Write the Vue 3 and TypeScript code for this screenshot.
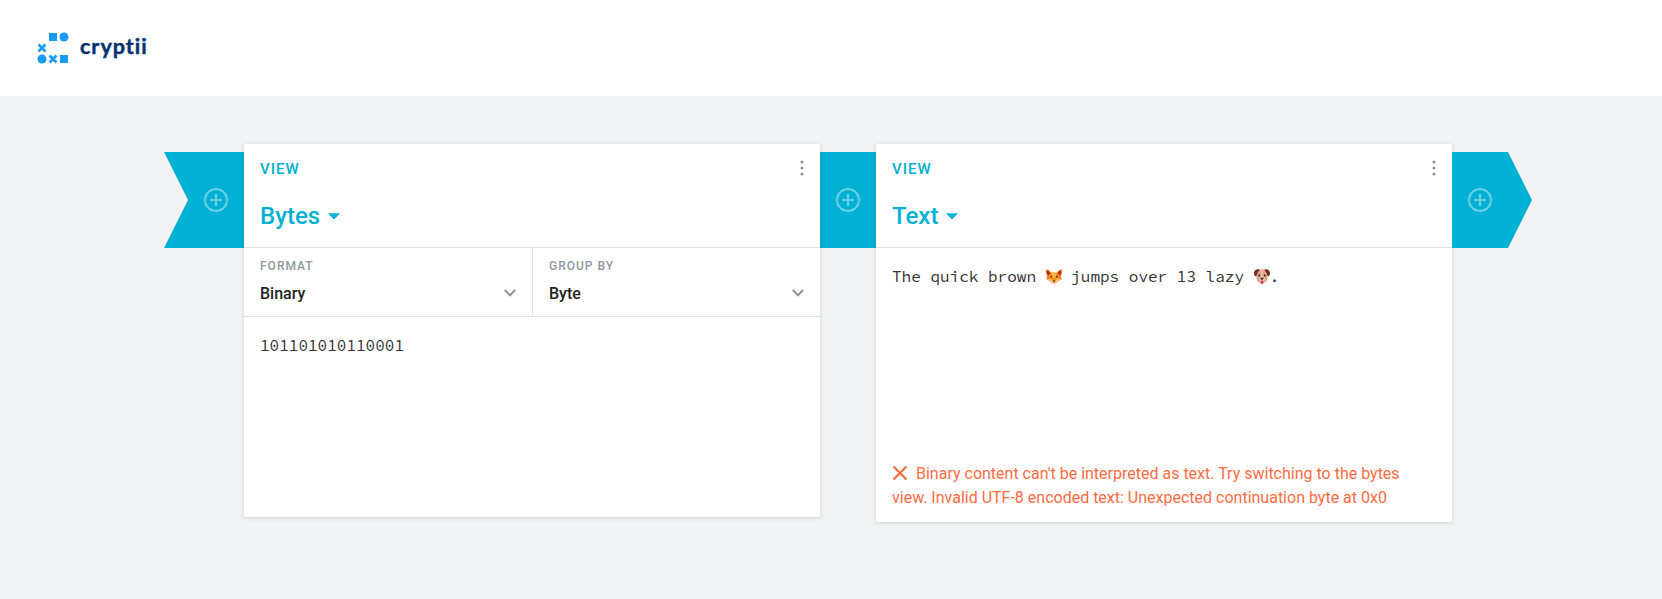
<script setup lang="ts">
interface Field {
  label: string
  value: string
}
interface Brick {
  title: string
  fields: Field[]
  content: string[]
  error?: string
}

const bricks: Brick[] = [
  {
    title: 'Bytes',
    fields: [
      { label: 'Format', value: 'Binary' },
      { label: 'Group by', value: 'Byte' },
    ],
    content: ['101101010110001'],
  },
  {
    title: 'Text',
    fields: [],
    content: ['The quick brown ', 'fox', ' jumps over 13 lazy ', 'dog', '.'],
    error:
      "Binary content can't be interpreted as text. Try switching to the bytes view. Invalid UTF-8 encoded text: Unexpected continuation byte at 0x0",
  },
]
</script>

<template>
  <div class="app">
    <header class="header">
      <a class="logo">
        <svg class="logo-mark" width="32" height="32" viewBox="0 0 32 32">
          <g fill="#1a9af0">
            <rect x="12" y="1" width="8" height="8" />
            <circle cx="27" cy="5" r="4.500" />
            <circle cx="5" cy="27" r="4.500" />
            <rect x="23" y="23" width="8" height="8" />
          </g>
          <g stroke="#1a9af0" stroke-width="2.600">
            <path d="M1.500 12.500l7 7M8.500 12.500l-7 7M12.500 23.500l7 7M19.500 23.500l-7 7" />
          </g>
        </svg>
        <span class="logo-text">cryptii</span>
      </a>
    </header>

    <main class="pipe">
      <div class="segment segment-start">
        <button class="add" aria-label="Add">
          <svg width="24" height="24" viewBox="0 0 24 24"><circle cx="12" cy="12" r="11" /><path d="M12 6v12M6 12h12" /></svg>
        </button>
      </div>
      <template v-for="(brick, i) in bricks" :key="brick.title">
        <section class="brick">
          <div class="brick-header">
            <div class="brick-top">
              <span class="mode">View</span>
              <svg class="menu" width="4" height="16" viewBox="0 0 4 16">
                <circle cx="2" cy="2" r="1.600" /><circle cx="2" cy="8" r="1.600" /><circle cx="2" cy="14" r="1.600" />
              </svg>
            </div>
            <h3 class="title">
              {{ brick.title }}
              <svg width="12" height="7" viewBox="0 0 12 7"><path d="M0 0.300h12L6 6.600z" /></svg>
            </h3>
          </div>
          <div v-if="brick.fields.length" class="fields">
            <div v-for="field in brick.fields" :key="field.label" class="field">
              <span class="label">{{ field.label }}</span>
              <span class="value">
                {{ field.value }}
                <svg width="12" height="8" viewBox="0 0 12 8"><path d="M0.800 1l5.200 5.200L11.200 1" /></svg>
              </span>
            </div>
          </div>
          <div class="content"><template v-for="(part, n) in brick.content" :key="n"><svg v-if="part === 'fox'" class="emoji" width="16" height="16" viewBox="0 0 16 16" role="img" aria-label="🦊">
                <path fill="#f28a1c" d="M0 .5C2.500.4 4 1.800 5 3.600h6C12 1.800 13.500.4 16 .5c.3 2.700-.2 5-1.200 6.500l1 3-2.600 1.500L10 14c-1.300 1.100-2.700 1.100-4 0l-3.200-2.500L.2 10l1-3C.2 5.500-.3 3.200 0 .5z" />
                <path fill="#bd2419" d="M.7 1.300C2.500 1.600 3.600 2.800 4.400 4.400L2 6.500C1 5 .7 3.300.7 1.300zM15.300 1.300c-1.800.3-2.900 1.500-3.700 3.100L14 6.500c1-1.500 1.300-3.200 1.300-5.200z" />
                <path fill="#ffb53f" d="M5.500 4.500L8 3.600l2.500.9L9.400 9H6.600z" />
                <path fill="#ffc070" d="M1.500 10.400l3.200-.8L7 12l1 .5L9 12l2.300-2.400 3.200.8-2.200 1.400L10 14H6l-2.300-2.200z" />
                <circle cx="5.200" cy="7.600" r=".95" fill="#513127" /><circle cx="10.800" cy="7.600" r=".95" fill="#513127" />
                <path fill="#3a3034" d="M6.600 11.600h2.800L8 13.600z" />
              </svg><svg v-else-if="part === 'dog'" class="emoji" width="16" height="16" viewBox="0 0 16 16" role="img" aria-label="🐶">
                <path fill="#dda188" d="M3.500 1.600C6 0 10 0 12.500 1.600 14 4 14.200 9 12.500 12c-1.500 2.700-7.500 2.700-9 0C1.800 9 2 4 3.500 1.600z" />
                <path fill="#e8bba5" d="M7.200 1h1.600l.6 6 2 3.200c0 2.400-1.400 3.300-3.400 3.300s-3.400-.9-3.400-3.300l2-3.200z" />
                <path fill="#6e291d" d="M5.800.8C3.500-.3 1.500.6.400 2.600-.4 4.200 0 6.500 1.600 7.400c1.500-.6 1.200-4 4.200-6.600zM10.200.8c2.300-1.100 4.300-.2 5.400 1.800.8 1.600.4 3.900-1.200 4.800-1.500-.6-1.200-4-4.200-6.600z" />
                <circle cx="5.200" cy="6.500" r="1.050" fill="#352c30" /><circle cx="10.800" cy="6.500" r="1.050" fill="#352c30" />
                <path fill="#352c30" d="M6 8.800h4L8.500 10.800v.8h-1v-.8z" />
                <path fill="#ed2f4f" d="M6.700 12h2.600v1.800c0 1.600-2.600 1.600-2.600 0z" />
              </svg><template v-else>{{ part }}</template></template></div>
          <p v-if="brick.error" class="error">
            <svg width="16" height="16" viewBox="0 0 16 16"><path d="M1.500 1.500l13 13M14.500 1.500l-13 13" /></svg>{{ brick.error }}
          </p>
        </section>
        <div class="segment" :class="{ 'segment-end': i === bricks.length - 1 }">
          <button class="add" aria-label="Add">
            <svg width="24" height="24" viewBox="0 0 24 24"><circle cx="12" cy="12" r="11" /><path d="M12 6v12M6 12h12" /></svg>
          </button>
        </div>
      </template>
    </main>
  </div>
</template>

<style>
body {
  margin: 0;
  background: #f2f3f5;
}
</style>

<style scoped>
.app {
  box-sizing: border-box;
  height: 599px;
  overflow: hidden;
  background: #f2f3f5;
  font-family: Roboto, sans-serif;
  font-size: 16px;
}
.header {
  display: flex;
  align-items: center;
  box-sizing: border-box;
  height: 96px;
  padding-left: 37px;
  background: #fff;
}
.logo {
  display: flex;
  align-items: center;
}
.logo-text {
  margin: -4px 0 0 11px;
  color: #06316f;
  font: 700 21.5px/32px Lato, sans-serif;
  letter-spacing: 1px;
  -webkit-text-stroke: 0.45px #06316f;
}
.pipe {
  display: flex;
  align-items: flex-start;
  padding: 48px 0 0 164px;
}
.segment {
  display: flex;
  align-items: center;
  justify-content: center;
  flex: none;
  box-sizing: border-box;
  width: 56px;
  height: 96px;
  margin-top: 8px;
  background: #00b1d4;
}
.segment-start {
  width: 80px;
  padding-left: 24px;
  clip-path: polygon(0 0, 100% 0, 100% 100%, 0 100%, 24px 50%);
}
.segment-end {
  width: 80px;
  padding-right: 24px;
  clip-path: polygon(0 0, 56px 0, 100% 50%, 56px 100%, 0 100%);
}
.add {
  display: block;
  width: 24px;
  height: 24px;
  padding: 0;
  border: 0;
  background: none;
}
.add svg {
  display: block;
  fill: none;
  stroke: #fff;
  stroke-width: 2;
  opacity: 0.4;
}
.brick {
  display: flex;
  flex-direction: column;
  flex: none;
  width: 576px;
  border-radius: 2px;
  background: #fff;
  box-shadow: 0 1px 4px rgba(20, 30, 40, 0.16);
  position: relative;
}
.brick-header {
  box-sizing: border-box;
  height: 104px;
  padding: 12px 16px 0;
  border-bottom: 1px solid #e0e3e6;
}
.brick-top {
  display: flex;
  align-items: center;
  justify-content: space-between;
  height: 24px;
}
.mode {
  padding-top: 2px;
  color: #00b1d4;
  font-size: 15px;
  font-weight: 500;
  letter-spacing: 1px;
  text-transform: uppercase;
}
.menu {
  fill: #8f999f;
}
.title {
  display: flex;
  align-items: center;
  gap: 8px;
  margin: 20px 0 0;
  color: #00b1d4;
  font-size: 24px;
  font-weight: 500;
  line-height: 32px;
}
.title svg {
  fill: #00b1d4;
}
.fields {
  display: grid;
  grid-template-columns: 1fr 1fr;
  border-bottom: 1px solid #e0e3e6;
}
.field {
  box-sizing: border-box;
  height: 68px;
  padding: 9px 16px 0;
}
.field + .field {
  border-left: 1px solid #e0e3e6;
}
.label {
  display: block;
  color: #8f999f;
  font-size: 12px;
  font-weight: 500;
  line-height: 18px;
  letter-spacing: 1px;
  text-transform: uppercase;
}
.value {
  display: flex;
  align-items: center;
  justify-content: space-between;
  margin-top: 7px;
  color: #222;
  font-weight: 500;
  line-height: 24px;
}
.value svg {
  margin-bottom: 2px;
  fill: none;
  stroke: #8f999f;
  stroke-width: 2.2;
}
.content {
  min-height: 200px;
  box-sizing: border-box;
  padding: 16px;
  color: #333;
  font: 16px/25px "Source Code Pro", "Liberation Mono", monospace;
  white-space: pre-wrap;
}
.emoji {
  overflow: visible;
  vertical-align: -3px;
}
.error {
  margin: 0;
  padding: 14px 16px 12px;
  color: #ff6b42;
  line-height: 24px;
}
.error svg {
  margin-right: 8px;
  vertical-align: -2px;
  fill: none;
  stroke: #ff6b42;
  stroke-width: 2.2;
}
</style>
